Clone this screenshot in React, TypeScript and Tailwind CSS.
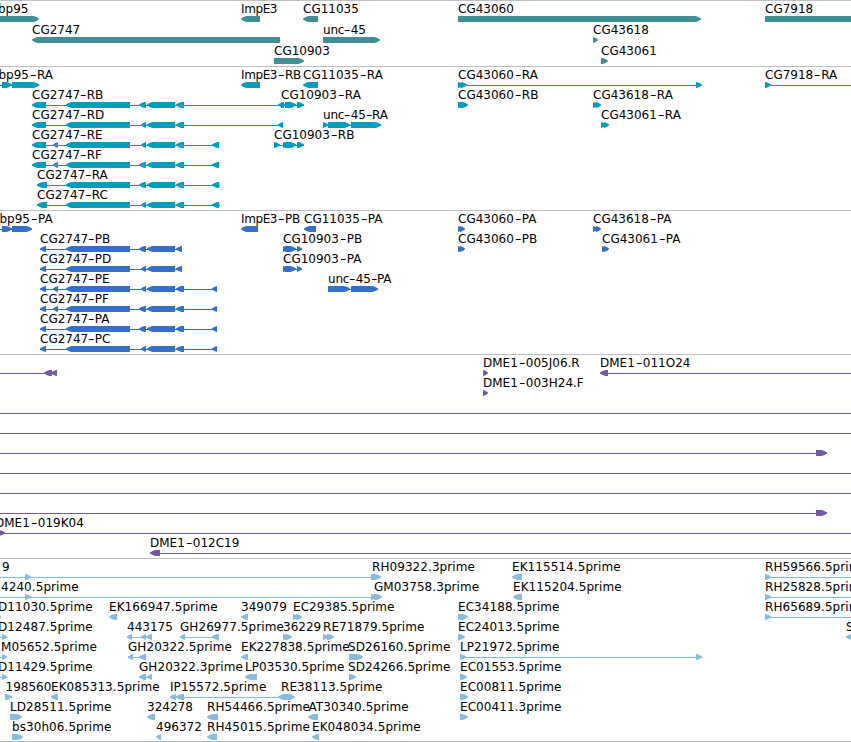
import React from "react";

type Dir = "l" | "r";
type Span = [number, number, Dir?];

interface Feature {
  label?: string;
  x: number;
  dir: Dir;
  blocks?: Span[];
  line?: [number, number];
}

interface TrackData {
  name: string;
  color: string;
  frame: string;
  rowHeight: string;
  rows: Feature[][];
}

const HEAD = 5.5;
const EDGE = 851;

const f = (
  label: string,
  x: number,
  dir: Dir,
  blocks: Span[] = [],
  line?: [number, number],
): Feature => ({ label, x, dir, blocks, line });

const gene2747 = (label: string, x: number, lead: Span[], twin: boolean, tail: Span[], end: number) =>
  f(
    label,
    x,
    "l",
    [...lead, [66, 130], ...(twin ? ([[139, 145]] as Span[]) : []), [141, 146], [147, 175], ...tail],
    [x, end],
  );

const tracks: TrackData[] = [
  {
    name: "genes",
    color: "#418e94",
    frame: "pb-[2px]",
    rowHeight: "h-[21px]",
    rows: [
      [
        f("bp95", -2, "r", [[-10, 39]]),
        f("ImpE3", 241, "l", [[241, 260]]),
        f("CG11035", 303, "l", [[303, 318]]),
        f("CG43060", 458, "r", [[458, 701]]),
        f("CG7918", 765, "r", [[765, 870]]),
      ],
      [
        f("CG2747", 32, "l", [[32, 280]]),
        f("unc-45", 323, "r", [[323, 380]]),
        f("CG43618", 593, "r", [[593, 598]]),
      ],
      [f("CG10903", 274, "r", [[274, 304]]), f("CG43061", 601, "r", [[601, 608]])],
    ],
  },
  {
    name: "transcripts",
    color: "#009dbf",
    frame: "pt-px pb-[2px]",
    rowHeight: "h-5",
    rows: [
      [
        f("bp95-RA", -1.5, "r", [[2, 12], [12, 39]], [0, 39]),
        f("ImpE3-RB", 241, "l", [[241, 260]]),
        f("CG11035-RA", 303, "l", [[303, 318]]),
        f("CG43060-RA", 458, "r", [[458, 464], [461, 467], [696, 702]], [458, 701]),
        f("CG7918-RA", 765, "r", [[765, 771]], [765, EDGE]),
      ],
      [
        gene2747("CG2747-RB", 32, [[32, 46]], true, [[176, 184], [278, 284]], 283),
        f("CG10903-RA", 281, "r", [[281, 285], [285, 296], [297, 304]], [281, 304]),
        f("CG43060-RB", 458, "r", [[458, 464], [460, 468]]),
        f("CG43618-RA", 593, "r", [[593, 598], [596, 601]]),
      ],
      [
        gene2747("CG2747-RD", 32, [[32, 46]], false, [[176, 184], [278, 283]], 283),
        f("unc-45-RA", 323, "r", [[323, 328], [328, 350], [351, 381]], [323, 381]),
        f("CG43061-RA", 601, "r", [[601, 606], [604, 609]]),
      ],
      [
        gene2747("CG2747-RE", 32, [[32, 46], [53, 58]], false, [[176, 184], [212, 219]], 219),
        f("CG10903-RB", 274, "r", [[274, 280], [283, 288], [285, 296], [297, 304]], [274, 304]),
      ],
      [gene2747("CG2747-RF", 32, [[32, 46], [53, 58]], true, [[176, 184], [212, 219]], 219)],
      [gene2747("CG2747-RA", 37, [[37, 47]], true, [[176, 184], [212, 219]], 220)],
      [gene2747("CG2747-RC", 37, [[37, 47]], false, [[176, 184], [212, 219]], 220)],
    ],
  },
  {
    name: "proteins",
    color: "#336fcd",
    frame: "pt-px pb-[2px]",
    rowHeight: "h-5",
    rows: [
      [
        f("bp95-PA", -0.5, "r", [[2, 12], [12, 32]], [0, 32]),
        f("ImpE3-PB", 241, "l", [[241, 258]]),
        f("CG11035-PA", 304, "l", [[304, 316]]),
        f("CG43060-PA", 458, "r", [[458, 463], [460, 465]]),
        f("CG43618-PA", 593, "r", [[593, 598], [596, 601]]),
      ],
      [
        gene2747("CG2747-PB", 40, [[40, 46]], true, [[176, 182]], 182),
        f("CG10903-PB", 283, "r", [[283, 288], [285, 296], [297, 302]], [283, 302]),
        f("CG43060-PB", 458, "r", [[458, 463], [460, 465]]),
        f("CG43061-PA", 602, "r", [[602, 607], [604, 609]]),
      ],
      [
        gene2747("CG2747-PD", 40, [[40, 46]], false, [[176, 182]], 182),
        f("CG10903-PA", 283, "r", [[283, 288], [285, 296], [297, 302]], [283, 302]),
      ],
      [
        gene2747("CG2747-PE", 40, [[40, 46], [53, 58]], false, [[176, 184], [212, 217]], 217),
        f("unc-45-PA", 328, "r", [[328, 350], [351, 378]], [328, 378]),
      ],
      [gene2747("CG2747-PF", 40, [[40, 46], [53, 58]], true, [[176, 184], [212, 217]], 217)],
      [gene2747("CG2747-PA", 40, [[40, 46]], true, [[176, 184], [212, 217]], 217)],
      [gene2747("CG2747-PC", 40, [[40, 46]], false, [[176, 184], [212, 217]], 217)],
    ],
  },
  {
    name: "clones",
    color: "#7459a8",
    frame: "pt-px pb-[2px]",
    rowHeight: "h-5",
    rows: [
      [
        f("", 0, "l", [[44, 52], [51, 57]], [0, 57]),
        f("DME1-005J06.R", 483, "r", [[483, 488]]),
        f("DME1-011O24", 600, "l", [[600, 608]], [600, EDGE]),
      ],
      [f("DME1-003H24.F", 483, "r", [[483, 488]])],
      [f("", 0, "r", [], [0, EDGE])],
      [f("", 0, "r", [], [0, EDGE])],
      [f("", 0, "r", [[816, 827]], [0, 827])],
      [f("", 0, "r", [], [0, EDGE])],
      [f("", 0, "r", [], [0, EDGE])],
      [f("", 0, "r", [[816, 827]], [0, 827])],
      [f("DME1-019K04", -5, "r", [[-2, 5]], [0, EDGE])],
      [f("DME1-012C19", 150, "l", [[150, 160]], [150, EDGE])],
    ],
  },
  {
    name: "ESTs",
    color: "#87bcde",
    frame: "pt-px pb-px",
    rowHeight: "h-5",
    rows: [
      [
        f("9", 2, "r", [[25, 31]], [0, 372]),
        f("RH09322.3prime", 372, "r", [[371, 381]]),
        f("EK115514.5prime", 512, "l", [[512, 522]]),
        f("RH59566.5prime", 765, "r", [[765, 771]], [765, EDGE]),
      ],
      [
        f("4240.5prime", 1, "r", [[25, 31]], [0, 372]),
        f("GM03758.3prime", 374, "r", [[371, 377], [374, 382]]),
        f("EK115204.5prime", 513, "l", [[513, 522]]),
        f("RH25828.5prime", 765, "r", [[765, 771]], [765, EDGE]),
      ],
      [
        f("D11030.5prime", -2, "r", [[-6, 1]]),
        f("EK166947.5prime", 109, "l", [[109, 117]]),
        f("349079", 241, "l", [[241, 248]]),
        f("EC29385.5prime", 293, "r", [[293, 298], [296, 302]]),
        f("EC34188.5prime", 458, "r", [[458, 464], [460, 468]]),
        f("RH65689.5prime", 765, "r", [[765, 771]], [765, EDGE]),
      ],
      [
        f("D12487.5prime", -2, "r", [[2, 7]], [0, 7]),
        f("443175", 127, "l", [[127, 132], [141, 146], [146, 152]], [127, 152]),
        f("GH26977.5prime", 180, "l", [[180, 185], [212, 219]], [180, 219]),
        f("36229", 283, "r", [[283, 288], [285, 292]]),
        f("RE71879.5prime", 323, "r", [[323, 328], [327, 334]]),
        f("EC24013.5prime", 458, "r", [[458, 465]]),
        f("SD", 846, "l", [[846, 856]]),
      ],
      [
        f("M05652.5prime", 1, "r", [[2, 7]], [0, 7]),
        f("GH20322.5prime", 128, "l", [[128, 133], [139, 146]], [128, 146]),
        f("EK227838.5prime", 241, "l", [[241, 248]]),
        f("SD26160.5prime", 348, "r", [[349, 363]]),
        f("LP21972.5prime", 460, "r", [[460, 466], [696, 702]], [460, 702]),
      ],
      [
        f("D11429.5prime", -2, "r", [[2, 7]], [0, 7]),
        f("GH20322.3prime", 139, "l", [[139, 145], [141, 146], [147, 152]], [139, 152]),
        f("LP03530.5prime", 245, "l", [[245, 257]]),
        f("SD24266.5prime", 348, "r", [[349, 356]]),
        f("EC01553.5prime", 460, "r", [[460, 467]]),
      ],
      [
        f("198560", 5.5, "r", [[5, 12]]),
        f("EK085313.5prime", 51, "l", [[51, 58]]),
        f("IP15572.5prime", 170, "l", [[170, 176], [176, 184]], [170, 285]),
        f("RE38113.5prime", 281, "r", [[278, 284, "l"], [283, 295]]),
        f("EC00811.5prime", 460, "r", [[460, 468]]),
      ],
      [
        f("LD28511.5prime", 10, "r", [[10, 22]]),
        f("324278", 147, "l", [[147, 155]]),
        f("RH54466.5prime", 207, "l", [[207, 218]]),
        f("AT30340.5prime", 308.5, "l", [[308, 318]]),
        f("EC00411.3prime", 460, "r", [[460, 468]]),
      ],
      [
        f("bs30h06.5prime", 12, "r", [[12, 23]]),
        f("496372", 156, "l", [[156, 161]]),
        f("RH45015.5prime", 207, "l", [[207, 217]]),
        f("EK048034.5prime", 312, "l", [[312, 319]]),
      ],
    ],
  },
];

function blockPath([a, b]: Span, dir: Dir) {
  const head = Math.min(HEAD, b - a);
  const [base, tip, s] = dir === "r" ? [a, b, 1] : [b, a, -1];
  const neck = tip - s * head;
  const mid = tip - s * head * 0.45;
  return `M${base} 0H${neck}L${mid} 1L${tip} 2.4V3.2L${mid} 5L${neck} 6H${base}Z`;
}

function spacing(text: string) {
  if (text.startsWith("ImpE3")) return "tracking-[-0.4px]";
  if (text.startsWith("unc")) return "tracking-[-0.2px]";
  if (text.endsWith("prime")) return "tracking-[0.07px]";
  return "tracking-normal";
}

function Label({ text, x }: { text: string; x: number }) {
  const [first, ...rest] = text.split("-");
  const tight = /^(CG2747|unc)/.test(text);
  return (
    <span
      className={`absolute bottom-[6px] whitespace-pre leading-[14px] ${spacing(text)}`}
      style={{ left: x }}
    >
      {first}
      {rest.map((part, i) => (
        <React.Fragment key={i}>
          <span
            className={`inline-block origin-left scale-x-[1.5] ${tight ? "w-[6.5px]" : "w-[8px] translate-x-px"}`}
          >
            -
          </span>
          {part}
        </React.Fragment>
      ))}
    </span>
  );
}

function Row({ features, color, height }: { features: Feature[]; color: string; height: string }) {
  return (
    <div className={`relative flex items-end ${height}`}>
      <svg width={EDGE} height={6} className="block shrink-0" fill={color}>
        {features.map((ft, i) => (
          <g key={i}>
            {ft.line && <rect x={ft.line[0]} y={3} width={ft.line[1] - ft.line[0]} height={1} />}
            {ft.blocks?.map((b, j) => (
              <path key={j} d={blockPath(b, b[2] ?? ft.dir)} />
            ))}
          </g>
        ))}
      </svg>
      {features.map((ft, i) => (ft.label ? <Label key={i} text={ft.label} x={ft.x} /> : null))}
    </div>
  );
}

export default function App() {
  return (
    <main className="flex h-[742px] w-[851px] flex-col overflow-hidden border-b border-[#c0c0c0] bg-white font-['DejaVu_Sans',sans-serif] text-[12px] text-black">
      {tracks.map((t) => (
        <section key={t.name} className={`flex flex-col border-t border-[#c0c0c0] ${t.frame}`}>
          {t.rows.map((row, i) => (
            <Row key={i} features={row} color={t.color} height={t.rowHeight} />
          ))}
        </section>
      ))}
    </main>
  );
}
